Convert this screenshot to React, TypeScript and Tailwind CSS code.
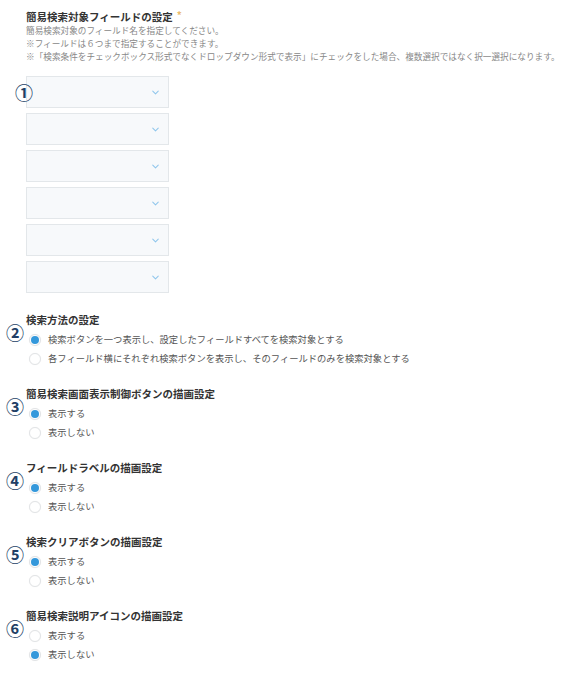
import { ChevronDown } from 'lucide-react'

const jp = { fontFamily: '"Noto Sans CJK JP", "Noto Sans", sans-serif' }

type RadioOption = { label: string; checked: boolean }

type RadioSection = {
  mark: string
  title: string
  options: RadioOption[]
}

const sections: RadioSection[] = [
  {
    mark: '②',
    title: '検索方法の設定',
    options: [
      { label: '検索ボタンを一つ表示し、設定したフィールドすべてを検索対象とする', checked: true },
      { label: '各フィールド横にそれぞれ検索ボタンを表示し、そのフィールドのみを検索対象とする', checked: false },
    ],
  },
  {
    mark: '③',
    title: '簡易検索画面表示制御ボタンの描画設定',
    options: [
      { label: '表示する', checked: true },
      { label: '表示しない', checked: false },
    ],
  },
  {
    mark: '④',
    title: 'フィールドラベルの描画設定',
    options: [
      { label: '表示する', checked: true },
      { label: '表示しない', checked: false },
    ],
  },
  {
    mark: '⑤',
    title: '検索クリアボタンの描画設定',
    options: [
      { label: '表示する', checked: true },
      { label: '表示しない', checked: false },
    ],
  },
  {
    mark: '⑥',
    title: '簡易検索説明アイコンの描画設定',
    options: [
      { label: '表示する', checked: false },
      { label: '表示しない', checked: true },
    ],
  },
]

// Annotation mark drawn over the form (①, ② ...)
function Mark({ children, className }: { children: string; className: string }) {
  return (
    <span
      className={`absolute text-[18px] leading-[18px] font-bold text-[#223f66] ${className}`}
      style={jp}
    >
      {children}
    </span>
  )
}

function Radio({ checked }: { checked: boolean }) {
  return (
    <span className="flex h-[12px] w-[12px] shrink-0 items-center justify-center rounded-full border border-[#e2e4e6] bg-white shadow-[0_0_1px_rgba(0,0,0,0.08)]">
      {checked && <span className="h-[8px] w-[8px] rounded-full bg-[#3498db]" />}
    </span>
  )
}

function FieldSelect({ index }: { index: number }) {
  return (
    <div className="relative flex h-[32px] w-[143px] items-center justify-end border border-[#e3e7ea] bg-[#f7f9fb] pr-[7px]">
      {index === 0 && <Mark className="left-[-12px] top-[6px]">①</Mark>}
      <ChevronDown className="h-[11px] w-[11px] text-[#8fc6ec]" strokeWidth={2.2} />
    </div>
  )
}

export default function App() {
  return (
    <div className="min-h-[674px] bg-white pl-[26px] pt-[10px]" style={jp}>
      {/* Search target fields */}
      <div className="h-[14px] text-[10.5px] font-bold leading-[14px] text-[#333]">
        簡易検索対象フィールドの設定
        <span className="relative top-[-2px] ml-[4px] text-[10px] font-bold text-[#ebbb6e]">*</span>
      </div>
      <div className="text-[8.65px] leading-[13px] text-[#888]">
        <p>簡易検索対象のフィールド名を指定してください。</p>
        <p>※フィールドは６つまで指定することができます。</p>
        <p>
          ※「検索条件をチェックボックス形式でなくドロップダウン形式で表示」にチェックをした場合、複数選択ではなく択一選択になります。
        </p>
      </div>

      <div className="mt-[13px] flex flex-col gap-[5px]">
        {[0, 1, 2, 3, 4, 5].map(i => (
          <FieldSelect key={i} index={i} />
        ))}
      </div>

      {/* Radio settings */}
      <div className="mt-[20px] flex flex-col gap-[19px]">
        {sections.map(section => (
          <div key={section.title} className="relative">
            <Mark className="left-[-20px] top-[10px]">{section.mark}</Mark>
            <div className="h-[14px] text-[10.5px] font-bold leading-[14px] text-[#333]">
              {section.title}
            </div>
            <div className="mt-[3px] flex flex-col">
              {section.options.map(option => (
                <label
                  key={option.label}
                  className="flex h-[19px] items-center gap-[7px] pl-[3px] text-[9.3px] text-[#555]"
                >
                  <Radio checked={option.checked} />
                  <span>{option.label}</span>
                </label>
              ))}
            </div>
          </div>
        ))}
      </div>
    </div>
  )
}
